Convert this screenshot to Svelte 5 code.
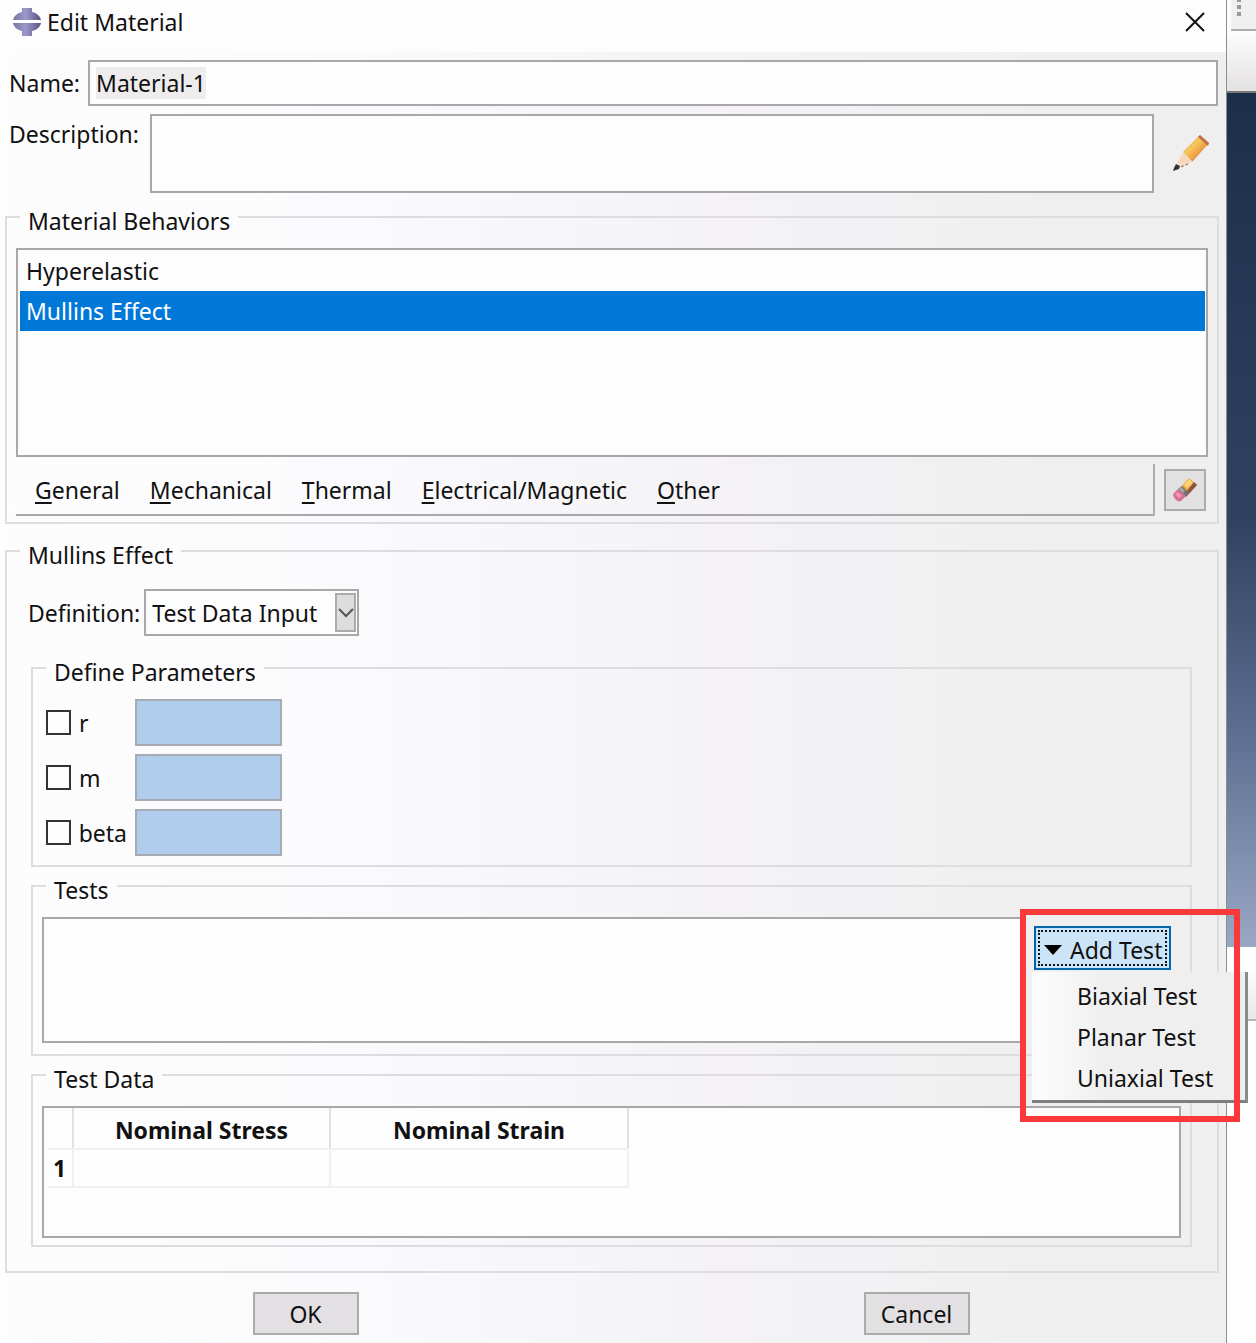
<script>
    import { onMount } from 'svelte';

    let name = 'Material-1';
    let description = '';
    let definition = 'Test Data Input';
    let nameInput;

    let behaviors = ['Hyperelastic', 'Mullins Effect'];
    let selected = 'Mullins Effect';

    let menus = ['General', 'Mechanical', 'Thermal', 'Electrical/Magnetic', 'Other'];
    let parameters = [
        { id: 'r', enabled: false, value: '' },
        { id: 'm', enabled: false, value: '' },
        { id: 'beta', enabled: false, value: '' }
    ];

    let testTypes = ['Biaxial Test', 'Planar Test', 'Uniaxial Test'];
    let menuOpen = true;

    // The name is selected when the dialog opens
    onMount(() => nameInput.select());
</script>

<div class="screen">
    <main class="dialog">
        <header>
            <svg class="logo" width="28" height="30" viewBox="0 0 28 30">
                <defs>
                    <linearGradient id="metal" x1="0" x2="1">
                        <stop offset="0" stop-color="#77769f" />
                        <stop offset="0.45" stop-color="#9c98cc" />
                        <stop offset="1" stop-color="#57557f" />
                    </linearGradient>
                </defs>
                <path d="M9 1h10v4c5 1 8 4 9 8H0c1-4 4-7 9-8z" fill="url(#metal)" />
                <path d="M0 16h28c-1 4-4 7-9 8v5H9v-5c-5-1-8-4-9-8z" fill="url(#metal)" />
            </svg>
            <h1>Edit Material</h1>
            <button class="close" aria-label="Close">
                <svg width="20" height="20" viewBox="0 0 20 20">
                    <path d="M1 1l18 18M19 1L1 19" stroke="#111" stroke-width="2" fill="none" />
                </svg>
            </button>
        </header>

        <div class="name-row">
            <label for="name">Name:</label>
            <input id="name" class="box" type="text" bind:value={name} bind:this={nameInput} />
        </div>

        <div class="description-row">
            <label for="description">Description:</label>
            <textarea id="description" class="box" bind:value={description}></textarea>
            <button class="edit" aria-label="Edit description">
                <svg width="38" height="40" viewBox="0 0 38 40">
                    <defs>
                        <linearGradient id="wood" x1="0.2" y1="0.2" x2="0.8" y2="0.8">
                            <stop offset="0" stop-color="#c98a3c" />
                            <stop offset="0.3" stop-color="#f6cb5e" />
                            <stop offset="0.65" stop-color="#f0a544" />
                            <stop offset="1" stop-color="#b9703a" />
                        </linearGradient>
                    </defs>
                    <path d="M11 18L28 1l9 8-17 19z" fill="url(#wood)" />
                    <path d="M28 1l9 8-1 3-10-9z" fill="#bd7048" />
                    <path d="M11 18l9 9-10 6-5-4z" fill="#f6d9bd" />
                    <path d="M4 30l4 2-1 3-6 2 1-3z" fill="#333" />
                    <path d="M9 33l9-4" stroke="#81604d" stroke-width="1" stroke-dasharray="3 2" />
                </svg>
            </button>
        </div>

        <fieldset class="behaviors">
            <legend>Material Behaviors</legend>
            <ul class="box behavior-list">
                {#each behaviors as behavior}
                    <li>
                        <button class:selected={behavior === selected} on:click={() => (selected = behavior)}>
                            {behavior}
                        </button>
                    </li>
                {/each}
            </ul>
            <div class="menu-row">
                <nav>
                    {#each menus as menu}
                        <button><u>{menu[0]}</u>{menu.slice(1)}</button>
                    {/each}
                </nav>
                <button class="erase" aria-label="Delete behavior">
                    <svg width="26" height="26" viewBox="0 0 26 26">
                        <path d="M8 11L17 1l8 7-10 11z" fill="#eda83e" />
                        <path d="M12 8l5-6 4 4-6 5z" fill="#ffd477" />
                        <path d="M22 5l3 3-11 12-2-2z" fill="#8e533e" />
                        <path d="M6 12l4-3 7 7-4 4z" fill="#6f7476" />
                        <path d="M7 12l2-2 4 4-2 2z" fill="#a5a9aa" />
                        <path d="M1 17l5-5 8 7-5 5c-3 2-8-3-8-7z" fill="#d9708f" />
                        <path d="M3 17l3-2 4 4-3 2z" fill="#ec9bb2" />
                    </svg>
                </button>
            </div>
        </fieldset>

        <fieldset class="effect">
            <legend>Mullins Effect</legend>
            <div class="definition">
                <label for="definition">Definition:</label>
                <div class="select">
                    <select id="definition" class="box" bind:value={definition}>
                        <option>Test Data Input</option>
                        <option>Constants</option>
                    </select>
                    <span class="arrow">
                        <svg width="16" height="10" viewBox="0 0 16 10">
                            <path d="M1 1l7 7 7-7" stroke="#555" stroke-width="2" fill="none" />
                        </svg>
                    </span>
                </div>
            </div>

            <div class="groups">
                <fieldset>
                    <legend>Define Parameters</legend>
                    <div class="parameters">
                        {#each parameters as parameter}
                            <label>
                                <input type="checkbox" bind:checked={parameter.enabled} />
                                {parameter.id}
                            </label>
                            <input
                                class="value"
                                type="text"
                                aria-label="{parameter.id} value"
                                disabled={!parameter.enabled}
                                bind:value={parameter.value}
                            />
                        {/each}
                    </div>
                </fieldset>

                <fieldset class="tests">
                    <legend>Tests</legend>
                    <div class="tests-row">
                        <ul class="box test-list"></ul>
                        <div class="add">
                            <button class="add-button" on:click={() => (menuOpen = !menuOpen)}>
                                <svg width="18" height="10" viewBox="0 0 18 10">
                                    <path d="M0 0h18L9 10z" fill="#000" />
                                </svg>
                                <span>Add Test</span>
                            </button>
                            {#if menuOpen}
                                <div class="popup">
                                    {#each testTypes as type}
                                        <button>{type}</button>
                                    {/each}
                                </div>
                            {/if}
                            <div class="highlight"></div>
                        </div>
                    </div>
                </fieldset>

                <fieldset class="data">
                    <legend>Test Data</legend>
                    <div class="box sheet">
                        <table>
                            <thead>
                                <tr>
                                    <th class="index"></th>
                                    <th class="stress">Nominal Stress</th>
                                    <th class="strain">Nominal Strain</th>
                                </tr>
                            </thead>
                            <tbody>
                                <tr>
                                    <th class="index">1</th>
                                    <td></td>
                                    <td></td>
                                </tr>
                            </tbody>
                        </table>
                    </div>
                </fieldset>
            </div>
        </fieldset>

        <footer>
            <button>OK</button>
            <button>Cancel</button>
        </footer>
    </main>

    <!-- The part of the main window that shows beside the dialog -->
    <aside>
        <div class="toolbar"><i></i><i></i><i></i></div>
        <div class="context"></div>
        <div class="viewport"></div>
        <div class="prompt"></div>
        <div class="messages"></div>
    </aside>
</div>

<style>
    :global(body) {
        margin: 0;
    }

    .screen {
        display: flex;
        min-height: 100vh;
        overflow: hidden;
        font-family: "Noto Sans", "Open Sans", sans-serif;
        font-size: 23px;
        line-height: 28px;
        color: #111;
    }

    .screen * {
        box-sizing: border-box;
    }

    button,
    input,
    textarea,
    select {
        margin: 0;
        padding: 0;
        border: 0;
        border-radius: 0;
        background: none;
        font: inherit;
        color: inherit;
    }

    svg {
        display: block;
    }

    ul {
        margin: 0;
        padding: 0;
        list-style: none;
    }

    .dialog {
        flex: 1;
        min-width: 0;
        background: linear-gradient(to right, #fefdfe 0%, #fbfafc 25%, #f4f2f5 60%, #f0eff0 85%);
        border-right: 1px solid #8d8d8d;
    }

    header {
        display: flex;
        align-items: center;
        height: 52px;
        padding: 0 21px 8px 13px;
        background: #fefdfe;
    }

    h1 {
        flex: 1;
        margin: 0 0 0 6px;
        font-size: 23px;
        font-weight: 400;
    }

    .box {
        border: 2px solid #a9a7aa;
        background: #fefdfe;
    }

    .name-row {
        display: flex;
        align-items: center;
        gap: 8px;
        padding: 8px 8px 0 9px;
    }

    .name-row input {
        flex: 1;
        min-width: 0;
        height: 46px;
        padding: 0 6px;
        outline: none;
    }

    .name-row input::selection {
        background: #eeeced;
        color: #111;
    }

    .description-row {
        display: flex;
        gap: 11px;
        padding: 8px 16px 6px 9px;
    }

    .description-row label {
        padding-top: 6px;
    }

    textarea {
        flex: 1;
        min-width: 0;
        height: 79px;
        resize: none;
    }

    .edit {
        align-self: center;
        margin-left: 7px;
    }

    fieldset {
        min-width: 0;
        margin: 0;
        padding: 13px 9px 9px;
        border: 2px solid #dedcdf;
    }

    legend {
        margin-left: 4px;
        padding: 8px 8px 0;
    }

    .behaviors,
    .effect {
        margin: 0 7px 9px 5px;
    }

    .behaviors {
        padding-bottom: 6px;
    }

    .behavior-list {
        height: 209px;
        padding: 1px 1px 0 2px;
    }

    .behavior-list button {
        display: block;
        width: 100%;
        height: 40px;
        padding: 0 6px;
        text-align: left;
    }

    .behavior-list .selected {
        background: #0078d8;
        color: #fff;
    }

    .menu-row {
        display: flex;
        align-items: center;
        gap: 9px;
        margin-top: 7px;
        padding-right: 2px;
    }

    nav {
        display: flex;
        flex: 1;
        gap: 30px;
        height: 52px;
        padding: 2px 19px 0;
        border-right: 2px solid #b0aeb0;
        border-bottom: 2px solid #a9a7aa;
    }

    u {
        text-underline-offset: 3px;
        text-decoration-thickness: 2px;
    }

    .erase {
        display: flex;
        align-items: center;
        justify-content: center;
        width: 42px;
        height: 42px;
        border: 2px solid #acabac;
        background: #e2e1e2;
    }

    .effect {
        margin-bottom: 19px;
        padding-bottom: 24px;
    }

    .definition {
        display: flex;
        align-items: center;
        gap: 4px;
        padding: 7px 12px 14px;
    }

    .select {
        position: relative;
    }

    select {
        appearance: none;
        width: 215px;
        height: 47px;
        padding: 0 6px;
    }

    .arrow {
        position: absolute;
        top: 4px;
        right: 3px;
        bottom: 4px;
        display: flex;
        align-items: center;
        justify-content: center;
        width: 21px;
        border: 2px solid #acabac;
        background: #dddcdf;
        pointer-events: none;
    }

    .groups {
        display: flex;
        flex-direction: column;
        gap: 1px;
        padding: 0 16px 0 15px;
    }

    .parameters {
        display: grid;
        grid-template-columns: 81px 147px;
        gap: 8px;
        padding: 0 4px;
    }

    .parameters label {
        display: flex;
        align-items: center;
        gap: 8px;
    }

    input[type="checkbox"] {
        appearance: none;
        width: 25px;
        height: 25px;
        border: 2px solid #333;
        background: #fefdfe;
    }

    input[type="checkbox"]:checked {
        background: #333;
        box-shadow: inset 0 0 0 4px #fefdfe;
    }

    .value {
        height: 47px;
        padding: 0 6px;
        border: 2px solid #a8abb4;
        background: #fefdfe;
    }

    .value:disabled {
        background: #b1cdee;
    }

    .tests {
        padding-bottom: 11px;
    }

    .tests-row {
        display: flex;
        gap: 10px;
        padding-right: 10px;
    }

    .test-list {
        flex: 1;
        height: 126px;
    }

    .add {
        position: relative;
        padding-top: 9px;
    }

    .add-button {
        display: flex;
        align-items: center;
        gap: 8px;
        width: 137px;
        height: 44px;
        padding: 3px 0 0 8px;
        border: 2px solid #0067ad;
        background: #cce4f7;
        outline: 2px dotted #111;
        outline-offset: -6px;
        white-space: nowrap;
        overflow: hidden;
    }

    .add-button svg {
        flex: none;
    }

    .popup {
        position: absolute;
        top: 55px;
        left: -2px;
        z-index: 1;
        width: 216px;
        padding: 3px 0 2px;
        border-right: 3px solid #8b8b8b;
        border-bottom: 3px solid #7e7e7e;
        background: linear-gradient(to right, #fefdfe, #f0efef 35%);
    }

    .popup button {
        display: block;
        width: 100%;
        height: 41px;
        padding-left: 45px;
        text-align: left;
    }

    .highlight {
        position: absolute;
        top: -8px;
        left: -14px;
        z-index: 2;
        width: 220px;
        height: 213px;
        border: 6px solid #fb393b;
        pointer-events: none;
    }

    .data {
        padding-bottom: 7px;
    }

    .sheet {
        height: 132px;
        padding: 0 3px;
    }

    table {
        border-collapse: collapse;
    }

    th,
    td {
        height: 38px;
        padding: 0;
        border: solid #f1eff2;
        border-width: 0 2px 2px 0;
    }

    thead th {
        height: 41px;
        padding-top: 4px;
        border-right-color: #e2e0e3;
    }

    .index {
        width: 26px;
    }

    .stress {
        width: 257px;
    }

    .strain {
        width: 298px;
    }

    footer {
        display: flex;
        justify-content: space-around;
        padding: 0 4px 8px 0;
    }

    footer button {
        width: 106px;
        height: 43px;
        border: 2px solid #acabac;
        background: #e2e0e3;
    }

    aside {
        display: flex;
        flex-direction: column;
        width: 29px;
        background: #fefdfe;
    }

    .toolbar {
        display: flex;
        flex-direction: column;
        justify-content: flex-end;
        gap: 3px;
        height: 31px;
        margin-left: 4px;
        padding: 0 6px 13px;
        border-bottom: 2px solid #adadad;
        background: #f1f0f1;
    }

    .toolbar i {
        flex: none;
        width: 4px;
        height: 4px;
        background: #999;
    }

    .context {
        height: 62px;
        border-bottom: 2px solid #777;
        background: linear-gradient(#fefdfe, #e3e1e2);
    }

    .viewport {
        flex: 854;
        background: linear-gradient(#1b2f4b, #2f4260 50%, #5d6f91 75%, #98a7c4);
    }

    .prompt {
        height: 74px;
        border-bottom: 2px solid #b5b5b5;
        background: linear-gradient(#fefdfe 30%, #e9e8e9);
    }

    .messages {
        flex: 322;
    }
</style>
